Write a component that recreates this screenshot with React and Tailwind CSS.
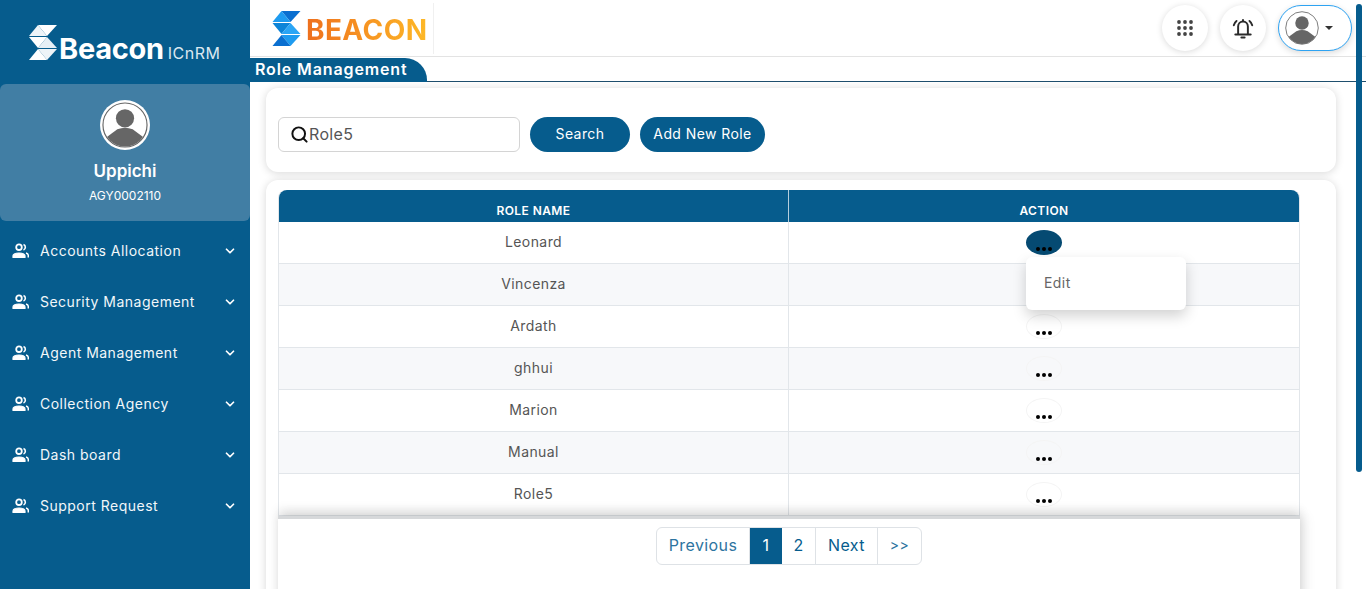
import { ChevronDown, Search } from "lucide-react";

const menu = [
  "Accounts Allocation",
  "Security Management",
  "Agent Management",
  "Collection Agency",
  "Dash board",
  "Support Request",
];

const roles = ["Leonard", "Vincenza", "Ardath", "ghhui", "Marion", "Manual", "Role5"];

function BeaconMark({ className, colors }) {
  return (
    <svg viewBox="0 0 28 35" className={className}>
      <polygon points="9,0 28,0 18,11" fill={colors[0]} />
      <polygon points="9,0 18,11 0,11" fill={colors[1]} />
      <polygon points="0,12 18,12 9,23" fill={colors[2]} />
      <polygon points="18,12 28,23 9,23" fill={colors[3]} />
      <polygon points="9,24 28,24 18,35" fill={colors[1]} />
      <polygon points="9,24 18,35 0,35" fill={colors[0]} />
    </svg>
  );
}

function Avatar({ className }) {
  return (
    <svg viewBox="0 0 48 48" className={className}>
      <defs>
        <clipPath id="avatarClip">
          <circle cx="24" cy="24" r="22.5" />
        </clipPath>
      </defs>
      <circle cx="24" cy="24" r="23" fill="#fff" stroke="#666" strokeWidth="1.2" />
      <circle cx="24" cy="17" r="9.5" fill="#666" />
      <path d="M3 38 L16 28.5 Q24 25 32 28.5 L45 38 V48 H3 Z" fill="#666" clipPath="url(#avatarClip)" />
    </svg>
  );
}

function PeopleIcon() {
  return (
    <svg viewBox="0 0 17 16" className="h-4 w-[17px] shrink-0" fill="none">
      <circle cx="7" cy="4.200" r="2.800" stroke="#fff" strokeWidth="1.800" />
      <path d="M11.500 1.500a2.900 2.900 0 0 1 0 5.400" stroke="#fff" strokeWidth="1.600" />
      <path d="M1 14.500v-1.500c0-1.800 2-3 6-3s6 1.200 6 3v1.500z" fill="#fff" stroke="#fff" strokeWidth="1.200" strokeLinejoin="round" />
      <path d="M14 10c1.500.4 2.300 1.300 2.300 2.500v2" stroke="#fff" strokeWidth="1.500" />
    </svg>
  );
}

function DotsGrid() {
  const dots = [];
  for (let y = 2; y <= 14; y += 6) {
    for (let x = 2; x <= 14; x += 6) {
      dots.push(<circle key={`${x}-${y}`} cx={x} cy={y} r="1.900" fill="#444" />);
    }
  }
  return (
    <svg viewBox="0 0 16 16" className="h-4 w-4">
      {dots}
    </svg>
  );
}

function BellIcon() {
  return (
    <svg viewBox="0 0 24 24" className="h-[26px] w-[26px]" fill="none" stroke="#2b2b2b" strokeWidth="1.800" strokeLinecap="round">
      <path d="M7.500 17.500V10.500a4.500 4.500 0 0 1 9 0v7" />
      <path d="M5 18h14" strokeWidth="2" />
      <path d="M10.500 20.800h3" strokeWidth="1.800" />
      <path d="M12 4.500v1" />
      <path d="M3.500 9.500c.4-1.700 1.200-3 2.500-4" />
      <path d="M20.500 9.500c-.4-1.700-1.200-3-2.500-4" />
    </svg>
  );
}

function Sidebar() {
  return (
    <aside className="flex h-full w-[250px] shrink-0 flex-col bg-[#065c8d] text-white">
      <div className="flex h-[84px] items-start pl-[29px] pt-[25px]">
        <BeaconMark className="h-[35px] w-[28px] shrink-0" colors={["#ffffff", "#eef4f8", "#ffffff", "#e6eff5"]} />
        <span className="ml-[2px] mt-[7px] text-[29px] font-bold leading-[34px] tracking-[-0.01em]">Beacon</span>
        <span className="ml-1 mt-[18px] text-base leading-5 tracking-[0.03em] text-[#dbe8f0]">ICnRM</span>
      </div>
      <div className="flex h-[137px] flex-col items-center rounded-md bg-[#417ea4] pt-4">
        <div className="h-[50px] w-[50px] rounded-full bg-white p-[2px]">
          <Avatar className="h-full w-full" />
        </div>
        <div className="mt-[9px] text-[17px] font-semibold leading-6">Uppichi</div>
        <div className="mt-[5px] text-xs leading-4">AGY0002110</div>
      </div>
      <nav className="mt-1">
        {menu.map((item) => (
          <div key={item} className="flex h-[51px] items-center pl-3 pr-[13px]">
            <PeopleIcon />
            <span className="ml-[11px] flex-1 text-sm tracking-[0.035em] text-[#f2f7fa]">{item}</span>
            <ChevronDown className="h-[14px] w-[14px]" strokeWidth={3} />
          </div>
        ))}
      </nav>
    </aside>
  );
}

function Header() {
  return (
    <header className="flex h-[57px] shrink-0 items-center border-b border-[#e3e3e3] bg-white pl-[22px] pr-[14px]">
      <div className="flex h-[51px] items-center border-r border-[#f0f0f0] pr-[6px]">
        <BeaconMark className="h-[35px] w-[29px] shrink-0" colors={["#0a6fd0", "#1e9bf0", "#0c84d8", "#2aa5f5"]} />
        <span className="ml-[5px] mt-[4px] bg-gradient-to-r from-[#ee6f1d] to-[#fdb827] bg-clip-text text-[28px] font-bold leading-8 tracking-[0.015em] text-transparent">
          BEACON
        </span>
      </div>
      <div className="ml-auto flex items-center">
        <button className="flex h-[46px] w-[46px] items-center justify-center rounded-full bg-white shadow-[0_1px_6px_rgba(0,0,0,0.15)]">
          <DotsGrid />
        </button>
        <button className="ml-3 flex h-[46px] w-[46px] items-center justify-center rounded-full bg-white shadow-[0_1px_6px_rgba(0,0,0,0.15)]">
          <BellIcon />
        </button>
        <button className="ml-3 flex h-[46px] w-[74px] items-center rounded-full border border-[#2ea3f2] bg-white pl-[6px] shadow-[0_2px_6px_rgba(0,0,0,0.15)]">
          <Avatar className="h-[34px] w-[34px]" />
          <span className="ml-[6px] h-0 w-0 border-x-4 border-t-4 border-x-transparent border-t-[#333]" />
        </button>
      </div>
    </header>
  );
}

function RoleRow({ name, index }) {
  const active = index === 0;
  return (
    <div className={`grid h-[42px] shrink-0 grid-cols-[510px_1fr] border-b border-[#e2e6ea] ${index % 2 ? "bg-[#f7f8fa]" : "bg-white"}`}>
      <div className="flex items-center justify-center border-r border-[#e2e6ea] pb-[2px] text-sm tracking-[0.03em] text-[#555]">{name}</div>
      <div className="relative pl-[237px] pt-2">
        <button className={`flex h-[25px] w-9 items-end justify-center rounded-[50%] ${active ? "bg-[#054a72] pb-1" : "border border-[#f4f4f4] bg-transparent pb-[3px]"}`}>
          <span className="flex gap-[2px]">
            <i className="h-1 w-1 rounded-full bg-black" />
            <i className="h-1 w-1 rounded-full bg-black" />
            <i className="h-1 w-1 rounded-full bg-black" />
          </span>
        </button>
        {active && (
          <div className="absolute left-[237px] top-[35px] z-20 h-[53px] w-40 rounded-md bg-white pl-[18px] pt-4 text-sm leading-5 tracking-[0.03em] text-[#666] shadow-[0_6px_14px_rgba(0,0,0,0.18)]">
            Edit
          </div>
        )}
      </div>
    </div>
  );
}

function Pagination() {
  const cell = "flex h-full items-center justify-center border-r border-[#dee2e6] pb-[2px] text-[#2d74a0]";
  return (
    <div className="flex h-[38px] w-[266px] overflow-hidden rounded-md border border-[#dee2e6] bg-white text-base tracking-[0.025em]">
      <span className={`${cell} w-[93px]`}>Previous</span>
      <span className="flex h-full w-8 items-center justify-center bg-[#065c8d] pb-[2px] text-white">1</span>
      <span className={`${cell} w-[34px] text-[#065c8d]`}>2</span>
      <span className={`${cell} w-[62px] text-[#065c8d]`}>Next</span>
      <span className="flex h-full flex-1 items-center justify-center pb-[2px] text-sm text-[#2d74a0]">&gt;&gt;</span>
    </div>
  );
}

export default function App() {
  return (
    <div className="relative flex h-[589px] w-[1366px] overflow-hidden bg-white font-['Inter','Liberation_Sans',sans-serif]">
      <Sidebar />
      <main className="flex min-w-0 flex-1 flex-col">
        <Header />
        <div className="h-[25px] shrink-0 border-b border-[#1f4f6e]">
          <div className="inline-flex h-6 w-[177px] items-center rounded-tr-[22px] bg-[#065c8d] pb-[2px] pl-[5px] text-base font-semibold tracking-[0.055em] text-white">
            Role Management
          </div>
        </div>

        <div className="flex-1 pl-4 pr-[30px] pt-[6px]">
          <section className="flex h-[84px] items-start rounded-xl bg-white pl-3 pt-[29px] shadow-[0_1px_8px_rgba(0,0,0,0.16)]">
            <div className="flex h-[35px] w-[242px] items-center rounded-md border border-[#d4d4d4] bg-white pb-px pl-[11px] text-base tracking-[0.02em] text-[#555]">
              <Search className="h-[19px] w-[19px] shrink-0 text-[#111]" strokeWidth={2.5} />
              <span>Role5</span>
            </div>
            <button className="ml-[10px] h-[35px] w-[100px] rounded-full bg-[#065c8d] pb-px text-sm tracking-[0.03em] text-white">Search</button>
            <button className="ml-[10px] h-[35px] w-[125px] rounded-full bg-[#065c8d] pb-px text-sm tracking-[0.03em] text-white">Add New Role</button>
          </section>

          <section className="mt-2 h-[440px] rounded-t-xl bg-white pl-3 pt-[10px] shadow-[0_1px_8px_rgba(0,0,0,0.16)]">
            <div className="relative h-[430px] w-[1022px]">
              <div className="flex h-[326px] w-[1022px] flex-col overflow-visible rounded-t-lg border-x border-[#e2e6ea]">
                <div className="grid h-8 shrink-0 grid-cols-[510px_1fr] rounded-t-lg bg-[#065c8d] text-xs font-semibold tracking-[0.035em] text-white">
                  <div className="flex items-end justify-center border-r border-white/70 pb-[3px]">ROLE NAME</div>
                  <div className="flex items-end justify-center pb-[3px]">ACTION</div>
                </div>
                {roles.map((name, i) => (
                  <RoleRow key={name} name={name} index={i} />
                ))}
              </div>
              <div className="absolute left-0 top-[326px] z-10 flex h-[104px] w-[1022px] justify-center border-t-[3px] border-[#d6d8da] bg-white pt-2 shadow-[0_-6px_10px_rgba(0,0,0,0.1),4px_0_12px_rgba(0,0,0,0.1)]">
                <Pagination />
              </div>
            </div>
          </section>
        </div>
      </main>
      {/* page scrollbar */}
      <div className="absolute right-1 top-1 h-[468px] w-[6px] rounded-full bg-[#065c8d]" />
    </div>
  );
}
